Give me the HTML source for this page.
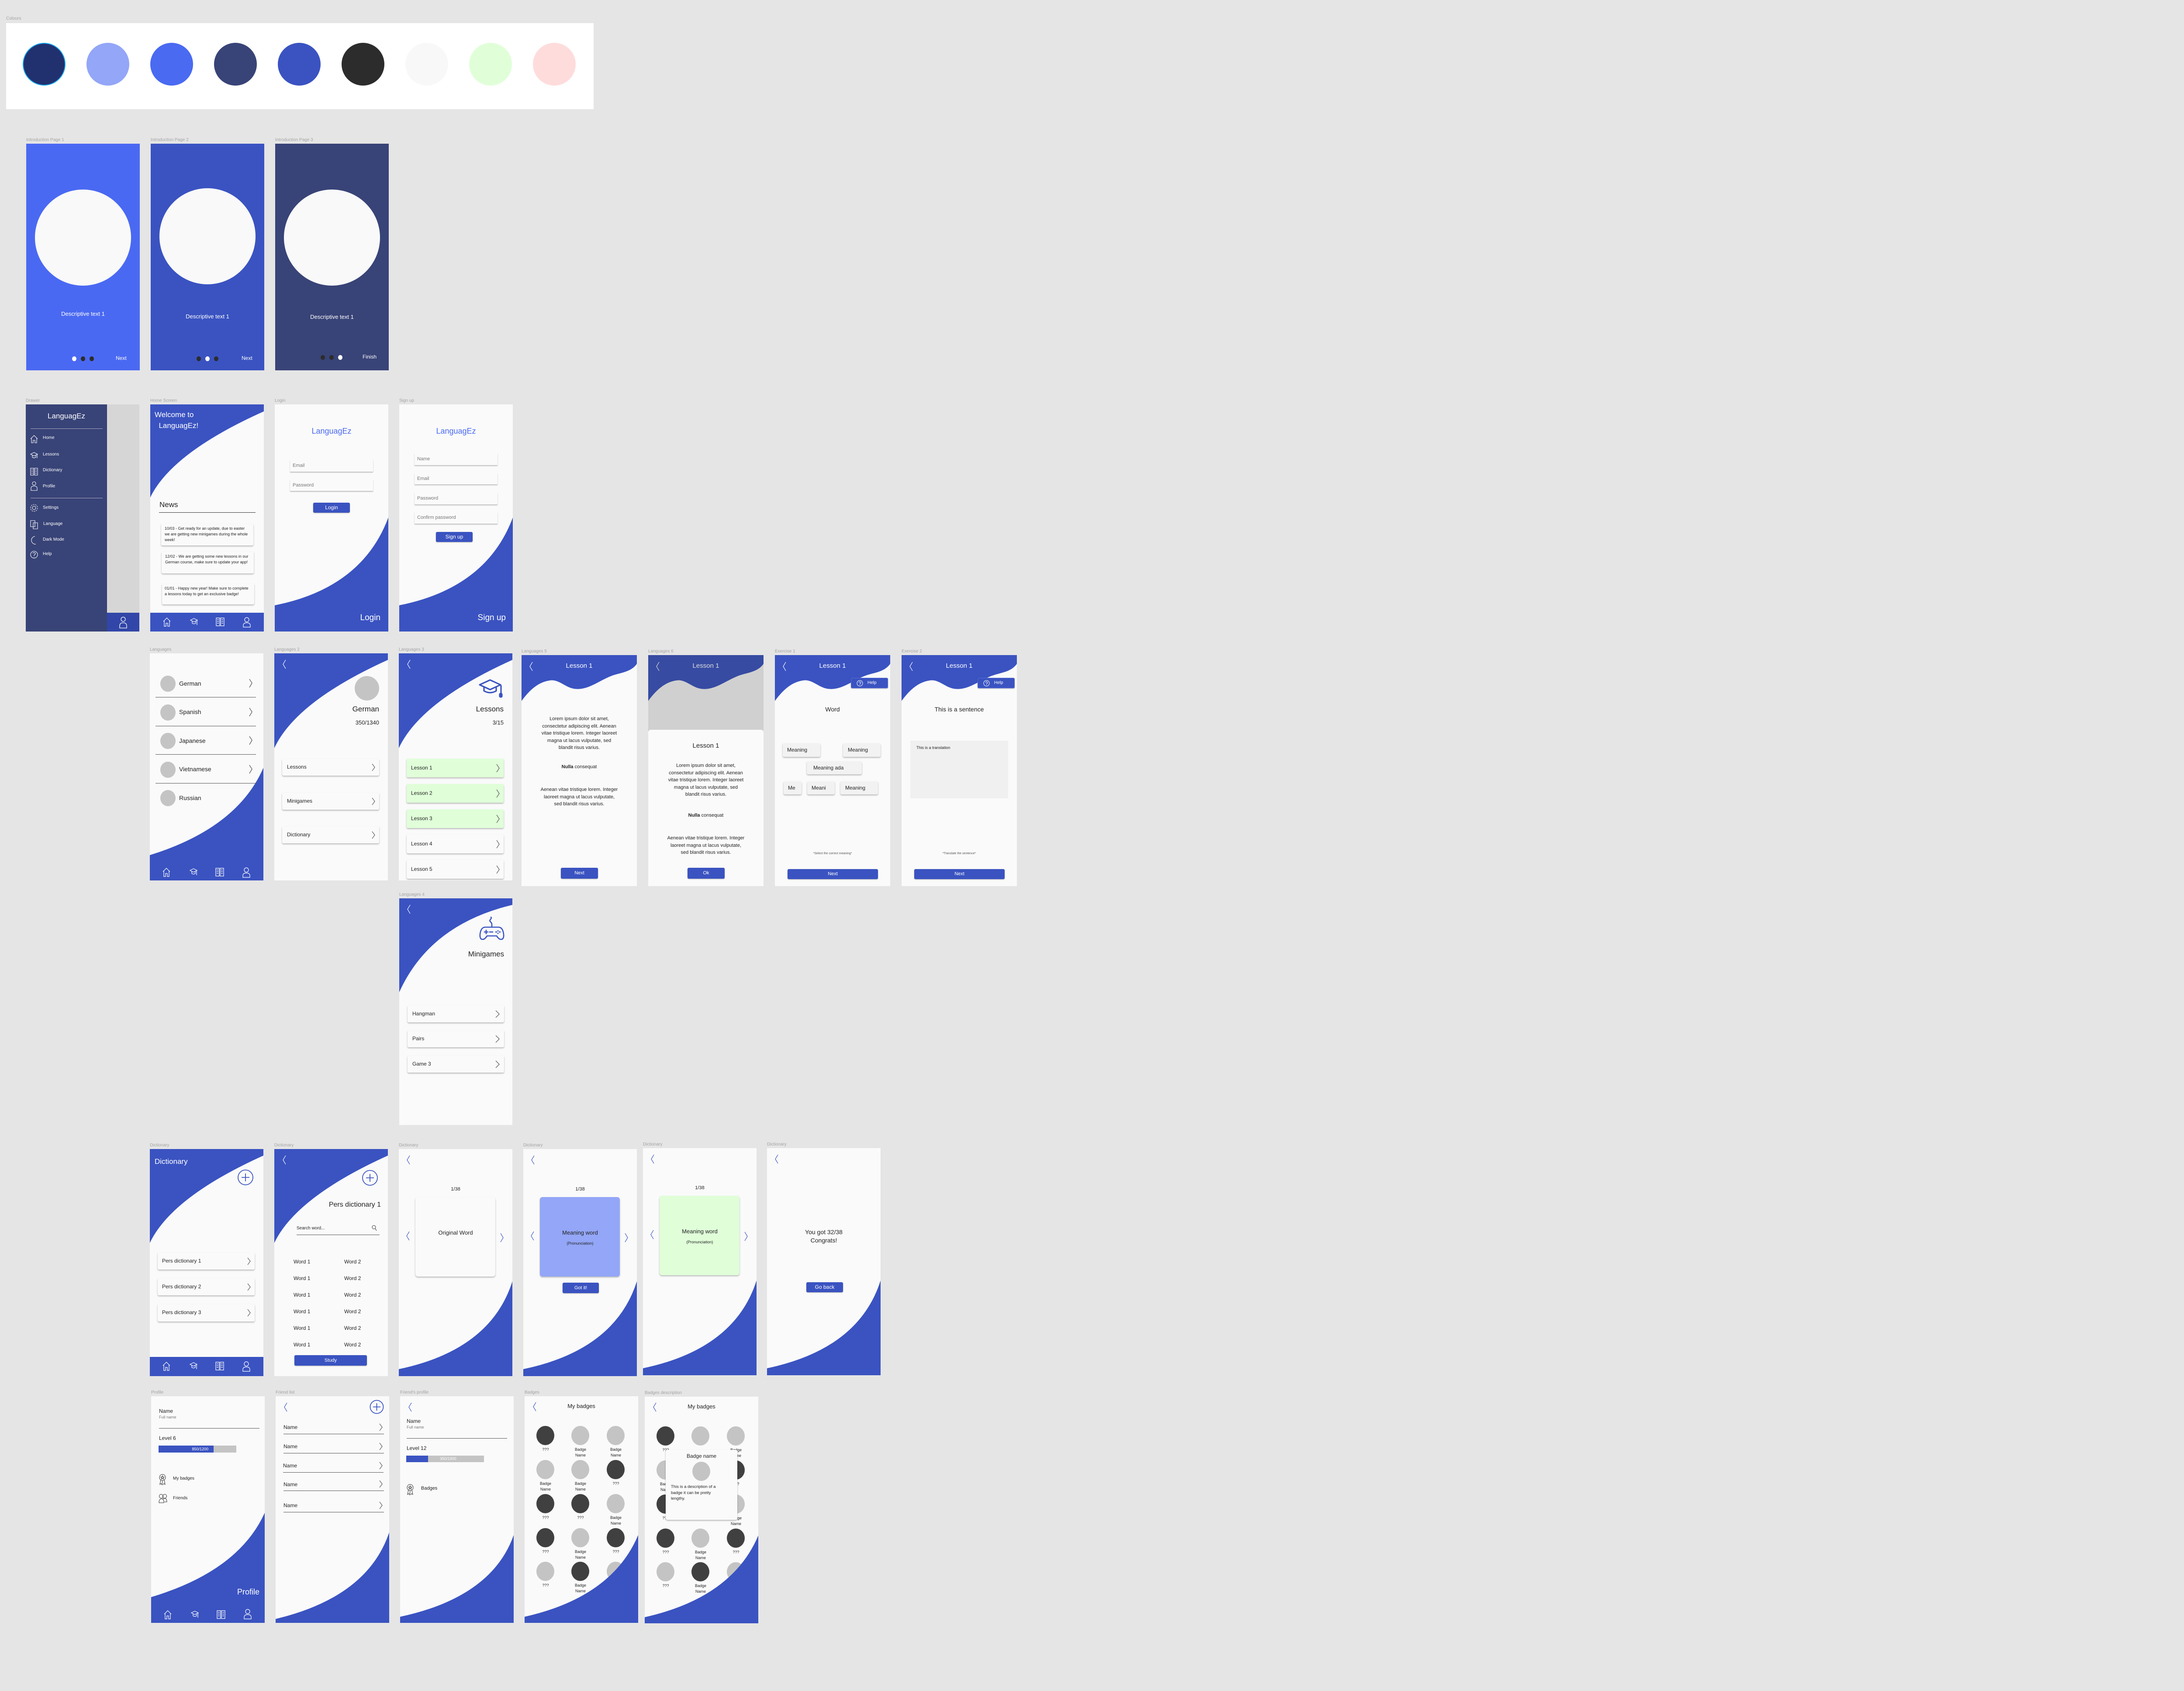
<!DOCTYPE html>
<html><head><meta charset="utf-8">
<style>
*{margin:0;padding:0;box-sizing:border-box}
body{width:5568px;height:3872px;background:#e5e5e5;position:relative;overflow:hidden;font-family:"Liberation Sans",sans-serif;color:#222}
.f{position:absolute;background:#fafafa;overflow:hidden}
.lbl{position:absolute;font-size:10px;color:#a3a3a3;white-space:nowrap}
.t{position:absolute;white-space:nowrap}
.bg{position:absolute;left:0;top:0;width:100%;height:100%}
.card{position:absolute;background:#fafafa;border-radius:3px;box-shadow:0 2px 3px rgba(0,0,0,.28)}
.btn{position:absolute;background:#3a53c1;color:#fff;border-radius:3px;text-align:center;font-size:11px;box-shadow:0 1px 2px rgba(0,0,0,.3)}
.field{position:absolute;background:#fafafa;box-shadow:0 2px 2px rgba(0,0,0,.25);font-size:11px;color:#777;padding-left:6px}
.nav{position:absolute;left:0;bottom:0;width:100%;height:40px;background:#3a53c1}
.nav svg{position:absolute;top:10px}
.cc{position:absolute;border-radius:50%}
.chev{position:absolute}
</style></head><body>

<!-- Palette -->
<div class="lbl" style="left:14px;top:37px">Colours</div>
<div style="position:absolute;left:14px;top:53px;width:1345px;height:197px;background:#fff"></div>
<div class="cc" style="left:52px;top:98px;width:98px;height:98px;background:#21306f;border:2px solid #1aa8f0"></div>
<div class="cc" style="left:198px;top:98px;width:98px;height:98px;background:#93a6f7"></div>
<div class="cc" style="left:344px;top:98px;width:98px;height:98px;background:#4a6af2"></div>
<div class="cc" style="left:490px;top:98px;width:98px;height:98px;background:#384377"></div>
<div class="cc" style="left:636px;top:98px;width:98px;height:98px;background:#3a53c1"></div>
<div class="cc" style="left:782px;top:98px;width:98px;height:98px;background:#2c2c2c"></div>
<div class="cc" style="left:928px;top:98px;width:98px;height:98px;background:#f8f8f8"></div>
<div class="cc" style="left:1074px;top:98px;width:98px;height:98px;background:#e0ffd9"></div>
<div class="cc" style="left:1220px;top:98px;width:98px;height:98px;background:#ffdcdc"></div>

<!-- Intro pages -->
<div class="lbl" style="left:60px;top:315px">Introduction Page 1</div>
<div class="f" style="left:60px;top:329px;width:260px;height:519px;background:#4a69f2">
 <div class="cc" style="left:20px;top:105px;width:220px;height:220px;background:#f9f9f9"></div>
 <div class="t" style="left:0;width:260px;text-align:center;top:382px;font-size:13px;color:#fff">Descriptive text 1</div>
 <div class="cc" style="left:105px;top:487px;width:10px;height:11px;background:#fff"></div>
 <div class="cc" style="left:125px;top:487px;width:10px;height:11px;background:#2c2c2c"></div>
 <div class="cc" style="left:145px;top:487px;width:10px;height:11px;background:#2c2c2c"></div>
 <div class="t" style="left:205px;top:484px;font-size:12px;color:#fff">Next</div>
</div>
<div class="lbl" style="left:345px;top:315px">Introduction Page 2</div>
<div class="f" style="left:345px;top:329px;width:260px;height:519px;background:#3a53c1">
 <div class="cc" style="left:20px;top:102px;width:220px;height:220px;background:#f9f9f9"></div>
 <div class="t" style="left:0;width:260px;text-align:center;top:388px;font-size:13px;color:#fff">Descriptive text 1</div>
 <div class="cc" style="left:105px;top:487px;width:10px;height:11px;background:#2c2c2c"></div>
 <div class="cc" style="left:125px;top:487px;width:10px;height:11px;background:#fff"></div>
 <div class="cc" style="left:145px;top:487px;width:10px;height:11px;background:#2c2c2c"></div>
 <div class="t" style="left:208px;top:484px;font-size:12px;color:#fff">Next</div>
</div>
<div class="lbl" style="left:630px;top:315px">Introduction Page 3</div>
<div class="f" style="left:630px;top:329px;width:260px;height:519px;background:#384377">
 <div class="cc" style="left:20px;top:105px;width:220px;height:220px;background:#f9f9f9"></div>
 <div class="t" style="left:0;width:260px;text-align:center;top:389px;font-size:13px;color:#fff">Descriptive text 1</div>
 <div class="cc" style="left:104px;top:484px;width:10px;height:11px;background:#2c2c2c"></div>
 <div class="cc" style="left:124px;top:484px;width:10px;height:11px;background:#2c2c2c"></div>
 <div class="cc" style="left:144px;top:484px;width:10px;height:11px;background:#fff"></div>
 <div class="t" style="left:200px;top:481px;font-size:12px;color:#fff">Finish</div>
</div>

<!-- Drawer -->
<div class="lbl" style="left:59px;top:912px">Drawer</div>
<div class="f" style="left:59px;top:926px;width:260px;height:520px;background:#d6d6d6">
 <div style="position:absolute;left:0;top:0;width:186px;height:520px;background:#384377"></div>
 <div style="position:absolute;left:186px;top:477px;width:74px;height:43px;background:#3146a8"></div>
 <svg style="position:absolute;left:213px;top:485px" width="20" height="28" viewBox="0 0 20 28" fill="none" stroke="#fff" stroke-width="1.3"><circle cx="10" cy="7" r="5"/><path d="M2 27 V22 Q2 15 10 15 Q18 15 18 22 V27 Z"/></svg>
 <div class="t" style="left:0;width:186px;text-align:center;top:17px;font-size:17px;color:#fff">LanguagEz</div>
 <div style="position:absolute;left:11px;top:55px;width:165px;height:1px;background:#aab"></div>
 <div style="position:absolute;left:11px;top:214px;width:165px;height:1px;background:#aab"></div>
 <svg style="position:absolute;left:9px;top:70px" width="22" height="290" fill="none" stroke="#fff" stroke-width="1.1">
  <path d="M2 9 L10 1 L18 9 M4 7 V18 H8 V12 H12 V18 H16 V7"/>
  <path d="M2 44 L10 40 L18 44 L10 48 Z M6 46 V51 Q10 54 14 51 V46 M17 45 V53"/>
  <path d="M2 76 H9 V92 H2 Z M11 76 H18 V92 H11 Z M4 80 H7 M4 84 H7 M4 88 H7 M13 80 H16 M13 84 H16 M13 88 H16"/>
  <circle cx="10" cy="111" r="4"/><path d="M3 127 V122 Q3 117 10 117 Q17 117 17 122 V127 Z"/>
  <circle cx="10" cy="167" r="4"/><circle cx="10" cy="167" r="8" stroke-dasharray="3 2"/>
  <path d="M2 196 H12 V210 H2 Z M8 201 H18 V215 H8 Z"/>
  <path d="M12 232 A9 9 0 1 0 14 250 A7 7 0 0 1 12 232 Z"/>
  <circle cx="10" cy="274" r="8"/><path d="M7 271 Q10 267 13 271 Q13 274 10 275 V277 M10 279 V280"/>
 </svg>
 <div class="t" style="left:39px;top:71px;font-size:10px;color:#fff">Home</div>
 <div class="t" style="left:39px;top:109px;font-size:10px;color:#fff">Lessons</div>
 <div class="t" style="left:39px;top:145px;font-size:10px;color:#fff">Dictionary</div>
 <div class="t" style="left:39px;top:182px;font-size:10px;color:#fff">Profile</div>
 <div class="t" style="left:39px;top:231px;font-size:10px;color:#fff">Settings</div>
 <div class="t" style="left:40px;top:268px;font-size:10px;color:#fff">Language</div>
 <div class="t" style="left:39px;top:304px;font-size:10px;color:#fff">Dark Mode</div>
 <div class="t" style="left:39px;top:337px;font-size:10px;color:#fff">Help</div>
</div>

<!-- Home -->
<div class="lbl" style="left:344px;top:912px">Home Screen</div>
<div class="f" style="left:344px;top:926px;width:260px;height:520px">
 <svg class="bg" viewBox="0 0 260 520" preserveAspectRatio="none"><path d="M0,0H260V16Q50,110 0,213Z" fill="#3a53c1"/></svg>
 <div class="t" style="left:10px;top:11px;font-size:17px;color:#fff;line-height:25px">Welcome to<br>&nbsp;&nbsp;LanguagEz!</div>
 <div class="t" style="left:21px;top:220px;font-size:17px;color:#222">News</div>
 <div style="position:absolute;left:20px;top:247px;width:221px;height:1px;background:#333"></div>
 <div class="card" style="left:25px;top:273px;width:211px;height:50px;font-size:9px;line-height:13px;padding:5px 8px">10/03 - Get ready for an update, due to easter we are getting new minigames during the whole week!</div>
 <div class="card" style="left:26px;top:337px;width:211px;height:50px;font-size:9px;line-height:13px;padding:5px 8px">12/02 - We are getting some new lessons in our German course, make sure to update your app!</div>
 <div class="card" style="left:27px;top:410px;width:211px;height:48px;font-size:9px;line-height:13px;padding:5px 6px">01/01 - Happy new year! Make sure to complete a lessons today to get an exclusive badge!</div>
 <div class="nav" style="height:43px">
  <svg style="left:28px" width="20" height="22" viewBox="0 0 20 22" fill="none" stroke="#fff" stroke-width="1.2"><path d="M2 10 L10 2 L18 10 M4 8 V21 H8 V14 H12 V21 H16 V8"/></svg>
  <svg style="left:90px" width="20" height="22" viewBox="0 0 20 22" fill="none" stroke="#fff" stroke-width="1.2"><path d="M2 7 L10 3 L18 7 L10 11 Z M6 9 V14 Q10 17 14 14 V9 M17 8 V18"/></svg>
  <svg style="left:150px" width="20" height="22" viewBox="0 0 20 22" fill="none" stroke="#fff" stroke-width="1.2"><path d="M1 2 H9 V20 H1 Z M11 2 H19 V20 H11 Z M3 6 H7 M3 10 H7 M3 14 H7 M13 6 H17 M13 10 H17 M13 14 H17"/></svg>
  <svg style="left:211px" width="20" height="24" viewBox="0 0 20 24" fill="none" stroke="#fff" stroke-width="1.2"><circle cx="10" cy="6" r="5"/><path d="M2 23 V19 Q2 13 10 13 Q18 13 18 19 V23 Z"/></svg>
 </div>
</div>

<!-- Login -->
<div class="lbl" style="left:629px;top:912px">Login</div>
<div class="f" style="left:629px;top:926px;width:260px;height:520px">
 <svg class="bg" viewBox="0 0 260 520" preserveAspectRatio="none"><path d="M260,259Q200,420 0,460V520H260Z" fill="#3a53c1"/></svg>
 <div class="t" style="left:0;width:260px;text-align:center;top:51px;font-size:18px;color:#4a6af2">LanguagEz</div>
 <div class="field" style="left:35px;top:127px;width:190px;height:27px;line-height:27px">Email</div>
 <div class="field" style="left:35px;top:172px;width:190px;height:26px;line-height:26px">Password</div>
 <div class="btn" style="left:88px;top:225px;width:84px;height:23px;line-height:23px;font-size:12px">Login</div>
 <div class="t" style="right:18px;top:478px;font-size:19px;color:#fff">Login</div>
</div>

<!-- Sign up -->
<div class="lbl" style="left:914px;top:912px">Sign up</div>
<div class="f" style="left:914px;top:926px;width:260px;height:520px">
 <svg class="bg" viewBox="0 0 260 520" preserveAspectRatio="none"><path d="M260,259Q200,420 0,460V520H260Z" fill="#3a53c1"/></svg>
 <div class="t" style="left:0;width:260px;text-align:center;top:51px;font-size:18px;color:#4a6af2">LanguagEz</div>
 <div class="field" style="left:35px;top:112px;width:190px;height:27px;line-height:27px">Name</div>
 <div class="field" style="left:35px;top:157px;width:190px;height:26px;line-height:26px">Email</div>
 <div class="field" style="left:35px;top:202px;width:190px;height:27px;line-height:27px">Password</div>
 <div class="field" style="left:35px;top:246px;width:190px;height:27px;line-height:27px">Confirm password</div>
 <div class="btn" style="left:84px;top:292px;width:84px;height:23px;line-height:23px;font-size:12px">Sign up</div>
 <div class="t" style="right:16px;top:478px;font-size:19px;color:#fff">Sign up</div>
</div>

<!-- Languages -->
<div class="lbl" style="left:343px;top:1482px">Languages</div>
<div class="f" style="left:343px;top:1496px;width:260px;height:520px">
 <svg class="bg" viewBox="0 0 260 520" preserveAspectRatio="none"><path d="M260,262Q200,400 0,462V520H260Z" fill="#3a53c1"/></svg>
 <div class="cc" style="left:24px;top:51px;width:35px;height:37px;background:#c4c4c4"></div>
 <div class="cc" style="left:24px;top:117px;width:35px;height:37px;background:#c4c4c4"></div>
 <div class="cc" style="left:24px;top:182px;width:35px;height:37px;background:#c4c4c4"></div>
 <div class="cc" style="left:24px;top:248px;width:35px;height:37px;background:#c4c4c4"></div>
 <div class="cc" style="left:24px;top:313px;width:35px;height:37px;background:#c4c4c4"></div>
 <div class="t" style="left:67px;top:61px;font-size:14px">German</div>
 <div class="t" style="left:67px;top:126px;font-size:14px">Spanish</div>
 <div class="t" style="left:67px;top:192px;font-size:14px">Japanese</div>
 <div class="t" style="left:67px;top:257px;font-size:14px">Vietnamese</div>
 <div class="t" style="left:67px;top:323px;font-size:14px">Russian</div>
 <div style="position:absolute;left:13px;top:100px;width:230px;height:1px;background:#555"></div>
 <div style="position:absolute;left:13px;top:166px;width:230px;height:1px;background:#555"></div>
 <div style="position:absolute;left:13px;top:231px;width:230px;height:1px;background:#555"></div>
 <div style="position:absolute;left:13px;top:297px;width:230px;height:1px;background:#555"></div>
 <svg style="position:absolute;left:226px;top:58px" width="10" height="230" fill="none" stroke="#333" stroke-width="1.1"><path d="M2 1 L8 10 L2 20 M2 67 L8 76 L2 86 M2 132 L8 141 L2 151 M2 198 L8 207 L2 217"/></svg>
 <div class="nav" style="background:transparent">
  <svg style="left:28px" width="20" height="22" viewBox="0 0 20 22" fill="none" stroke="#fff" stroke-width="1.2"><path d="M2 10 L10 2 L18 10 M4 8 V21 H8 V14 H12 V21 H16 V8"/></svg>
  <svg style="left:90px" width="20" height="22" viewBox="0 0 20 22" fill="none" stroke="#fff" stroke-width="1.2"><path d="M2 7 L10 3 L18 7 L10 11 Z M6 9 V14 Q10 17 14 14 V9 M17 8 V18"/></svg>
  <svg style="left:150px" width="20" height="22" viewBox="0 0 20 22" fill="none" stroke="#fff" stroke-width="1.2"><path d="M1 2 H9 V20 H1 Z M11 2 H19 V20 H11 Z M3 6 H7 M3 10 H7 M3 14 H7 M13 6 H17 M13 10 H17 M13 14 H17"/></svg>
  <svg style="left:211px" width="20" height="24" viewBox="0 0 20 24" fill="none" stroke="#fff" stroke-width="1.2"><circle cx="10" cy="6" r="5"/><path d="M2 23 V19 Q2 13 10 13 Q18 13 18 19 V23 Z"/></svg>
 </div>
</div>

<!-- Languages 2 -->
<div class="lbl" style="left:628px;top:1482px">Languages 2</div>
<div class="f" style="left:628px;top:1496px;width:260px;height:520px">
 <svg class="bg" viewBox="0 0 260 520" preserveAspectRatio="none"><path d="M0,0H260V15Q50,110 0,217Z" fill="#3a53c1"/></svg>
 <svg class="chev" style="left:18px;top:14px" width="10" height="22" fill="none" stroke="#fff" stroke-width="1.2"><path d="M8 1 L2 11 L8 21"/></svg>
 <div class="cc" style="left:184px;top:52px;width:56px;height:56px;background:#c4c4c4"></div>
 <div class="t" style="right:20px;top:118px;font-size:17px">German</div>
 <div class="t" style="right:20px;top:151px;font-size:13px">350/1340</div>
 <div class="card" style="left:18px;top:241px;width:222px;height:39px"><div class="t" style="left:11px;top:12px;font-size:12px">Lessons</div><svg class="chev" style="right:8px;top:11px" width="9" height="18" fill="none" stroke="#333"><path d="M1 1 L7 9 L1 17"/></svg></div>
 <div class="card" style="left:18px;top:319px;width:222px;height:39px"><div class="t" style="left:11px;top:12px;font-size:12px">Minigames</div><svg class="chev" style="right:8px;top:11px" width="9" height="18" fill="none" stroke="#333"><path d="M1 1 L7 9 L1 17"/></svg></div>
 <div class="card" style="left:18px;top:396px;width:222px;height:39px"><div class="t" style="left:11px;top:12px;font-size:12px">Dictionary</div><svg class="chev" style="right:8px;top:11px" width="9" height="18" fill="none" stroke="#333"><path d="M1 1 L7 9 L1 17"/></svg></div>
</div>

<!-- Languages 3 -->
<div class="lbl" style="left:913px;top:1482px">Languages 3</div>
<div class="f" style="left:913px;top:1496px;width:260px;height:520px">
 <svg class="bg" viewBox="0 0 260 520" preserveAspectRatio="none"><path d="M0,0H260V15Q50,110 0,217Z" fill="#3a53c1"/></svg>
 <svg class="chev" style="left:18px;top:14px" width="10" height="22" fill="none" stroke="#fff" stroke-width="1.2"><path d="M8 1 L2 11 L8 21"/></svg>
 <svg style="position:absolute;left:182px;top:58px" width="60" height="44" viewBox="0 0 60 44" fill="none" stroke="#3a53c1" stroke-width="3.2" stroke-linejoin="round"><path d="M3 14 L27 3 L51 14 L27 25 Z M13 19 V28 Q27 36 41 28 V19 M52 15 V38"/><rect x="49" y="34" width="5" height="8" rx="2" fill="#3a53c1"/></svg>
 <div class="t" style="right:20px;top:118px;font-size:17px">Lessons</div>
 <div class="t" style="right:20px;top:151px;font-size:13px">3/15</div>
 <div class="card" style="left:18px;top:241px;width:222px;height:43px;background:#e0ffd9"><div class="t" style="left:10px;top:14px;font-size:12px">Lesson 1</div><svg class="chev" style="right:8px;top:12px" width="9" height="20" fill="none" stroke="#333"><path d="M1 1 L7 10 L1 19"/></svg></div>
 <div class="card" style="left:18px;top:299px;width:222px;height:43px;background:#e0ffd9"><div class="t" style="left:10px;top:14px;font-size:12px">Lesson 2</div><svg class="chev" style="right:8px;top:12px" width="9" height="20" fill="none" stroke="#333"><path d="M1 1 L7 10 L1 19"/></svg></div>
 <div class="card" style="left:18px;top:357px;width:222px;height:43px;background:#e0ffd9"><div class="t" style="left:10px;top:14px;font-size:12px">Lesson 3</div><svg class="chev" style="right:8px;top:12px" width="9" height="20" fill="none" stroke="#333"><path d="M1 1 L7 10 L1 19"/></svg></div>
 <div class="card" style="left:18px;top:415px;width:222px;height:43px"><div class="t" style="left:10px;top:14px;font-size:12px">Lesson 4</div><svg class="chev" style="right:8px;top:12px" width="9" height="20" fill="none" stroke="#333"><path d="M1 1 L7 10 L1 19"/></svg></div>
 <div class="card" style="left:18px;top:473px;width:222px;height:43px"><div class="t" style="left:10px;top:14px;font-size:12px">Lesson 5</div><svg class="chev" style="right:8px;top:12px" width="9" height="20" fill="none" stroke="#333"><path d="M1 1 L7 10 L1 19"/></svg></div>
</div>

<!-- Languages 5 -->
<div class="lbl" style="left:1194px;top:1486px">Languages 5</div>
<div class="f" style="left:1194px;top:1500px;width:264px;height:529px">
 <svg class="bg" viewBox="0 0 264 529" preserveAspectRatio="none"><path d="M0,0H264V20C250,40 225,40 205,48C175,60 150,82 120,77C100,74 85,55 65,58C35,62 15,85 0,105Z" fill="#3a53c1"/></svg>
 <svg class="chev" style="left:17px;top:15px" width="10" height="22" fill="none" stroke="#fff" stroke-width="1.2"><path d="M8 1 L2 11 L8 21"/></svg>
 <div class="t" style="left:0;width:264px;text-align:center;top:16px;font-size:15px;color:#fff">Lesson 1</div>
 <div class="t" style="left:0;width:264px;text-align:center;top:138px;font-size:11px;line-height:16.6px">Lorem ipsum dolor sit amet,<br>consectetur adipiscing elit. Aenean<br>vitae tristique lorem. Integer laoreet<br>magna ut lacus vulputate, sed<br>blandit risus varius.</div>
 <div class="t" style="left:0;width:264px;text-align:center;top:250px;font-size:11px"><b>Nulla</b> consequat</div>
 <div class="t" style="left:0;width:264px;text-align:center;top:300px;font-size:11px;line-height:16.6px">Aenean vitae tristique lorem. Integer<br>laoreet magna ut lacus vulputate,<br>sed blandit risus varius.</div>
 <div class="btn" style="left:90px;top:487px;width:85px;height:25px;line-height:25px">Next</div>
</div>

<!-- Languages 6 -->
<div class="lbl" style="left:1484px;top:1486px">Languages 6</div>
<div class="f" style="left:1484px;top:1500px;width:264px;height:529px;background:#d0d0d0">
 <svg class="bg" viewBox="0 0 264 529" preserveAspectRatio="none"><path d="M0,0H264V20C250,40 225,40 205,48C175,60 150,82 120,77C100,74 85,55 65,58C35,62 15,85 0,105Z" fill="#374ba2"/></svg>
 <svg class="chev" style="left:17px;top:15px" width="10" height="22" fill="none" stroke="#ddd" stroke-width="1.2"><path d="M8 1 L2 11 L8 21"/></svg>
 <div class="t" style="left:0;width:264px;text-align:center;top:16px;font-size:15px;color:#ddd">Lesson 1</div>
 <div style="position:absolute;left:0;top:171px;width:264px;height:358px;background:#fafafa;border-radius:6px 6px 0 0"></div>
 <div class="t" style="left:0;width:264px;text-align:center;top:199px;font-size:15px">Lesson 1</div>
 <div class="t" style="left:0;width:264px;text-align:center;top:245px;font-size:11px;line-height:16.6px">Lorem ipsum dolor sit amet,<br>consectetur adipiscing elit. Aenean<br>vitae tristique lorem. Integer laoreet<br>magna ut lacus vulputate, sed<br>blandit risus varius.</div>
 <div class="t" style="left:0;width:264px;text-align:center;top:361px;font-size:11px"><b>Nulla</b> consequat</div>
 <div class="t" style="left:0;width:264px;text-align:center;top:411px;font-size:11px;line-height:16.6px">Aenean vitae tristique lorem. Integer<br>laoreet magna ut lacus vulputate,<br>sed blandit risus varius.</div>
 <div class="btn" style="left:90px;top:487px;width:85px;height:25px;line-height:25px">Ok</div>
</div>

<!-- Exercise 1 -->
<div class="lbl" style="left:1774px;top:1486px">Exercise 1</div>
<div class="f" style="left:1774px;top:1500px;width:264px;height:529px">
 <svg class="bg" viewBox="0 0 264 529" preserveAspectRatio="none"><path d="M0,0H264V20C250,40 225,40 205,48C175,60 150,82 120,77C100,74 85,55 65,58C35,62 15,85 0,105Z" fill="#3a53c1"/></svg>
 <svg class="chev" style="left:17px;top:15px" width="10" height="22" fill="none" stroke="#fff" stroke-width="1.2"><path d="M8 1 L2 11 L8 21"/></svg>
 <div class="t" style="left:0;width:264px;text-align:center;top:16px;font-size:15px;color:#fff">Lesson 1</div>
 <div class="btn" style="left:174px;top:52px;width:85px;height:24px;border:1px solid #5a70d6"><svg style="position:absolute;left:12px;top:4px" width="15" height="16" fill="none" stroke="#fff" stroke-width="1"><circle cx="7.5" cy="7.5" r="6.5"/><path d="M5 6 Q7.5 2 10 6 Q10 8 7.5 9 V10.5 M7.5 12 V12.5"/></svg><span style="position:absolute;left:37px;top:5px;font-size:10px">Help</span></div>
 <div class="t" style="left:0;width:264px;text-align:center;top:116px;font-size:14px">Word</div>
 <div class="card" style="left:18px;top:202px;width:86px;height:31px;background:#f2f2f2;font-size:12px;line-height:31px;padding-left:10px">Meaning</div>
 <div class="card" style="left:156px;top:202px;width:86px;height:31px;background:#f2f2f2;font-size:12px;line-height:31px;padding-left:11px">Meaning</div>
 <div class="card" style="left:73px;top:243px;width:126px;height:30px;background:#f2f2f2;font-size:12px;line-height:30px;padding-left:15px">Meaning ada</div>
 <div class="card" style="left:20px;top:289px;width:41px;height:30px;background:#f2f2f2;font-size:12px;line-height:30px;padding-left:10px">Me</div>
 <div class="card" style="left:74px;top:289px;width:63px;height:30px;background:#f2f2f2;font-size:12px;line-height:30px;padding-left:10px">Meani</div>
 <div class="card" style="left:150px;top:289px;width:86px;height:30px;background:#f2f2f2;font-size:12px;line-height:30px;padding-left:11px">Meaning</div>
 <div class="t" style="left:0;width:264px;text-align:center;top:451px;font-size:7px;color:#555">*Select the correct meaning*</div>
 <div class="btn" style="left:29px;top:490px;width:207px;height:23px;line-height:23px">Next</div>
</div>

<!-- Exercise 2 -->
<div class="lbl" style="left:2064px;top:1486px">Exercise 2</div>
<div class="f" style="left:2064px;top:1500px;width:264px;height:529px">
 <svg class="bg" viewBox="0 0 264 529" preserveAspectRatio="none"><path d="M0,0H264V20C250,40 225,40 205,48C175,60 150,82 120,77C100,74 85,55 65,58C35,62 15,85 0,105Z" fill="#3a53c1"/></svg>
 <svg class="chev" style="left:17px;top:15px" width="10" height="22" fill="none" stroke="#fff" stroke-width="1.2"><path d="M8 1 L2 11 L8 21"/></svg>
 <div class="t" style="left:0;width:264px;text-align:center;top:16px;font-size:15px;color:#fff">Lesson 1</div>
 <div class="btn" style="left:174px;top:52px;width:85px;height:24px;border:1px solid #5a70d6"><svg style="position:absolute;left:12px;top:4px" width="15" height="16" fill="none" stroke="#fff" stroke-width="1"><circle cx="7.5" cy="7.5" r="6.5"/><path d="M5 6 Q7.5 2 10 6 Q10 8 7.5 9 V10.5 M7.5 12 V12.5"/></svg><span style="position:absolute;left:37px;top:5px;font-size:10px">Help</span></div>
 <div class="t" style="left:0;width:264px;text-align:center;top:116px;font-size:14px">This is a sentence</div>
 <div style="position:absolute;left:20px;top:196px;width:224px;height:132px;background:#f0f0f0"></div>
 <div class="t" style="left:34px;top:207px;font-size:9px">This is a translation</div>
 <div class="t" style="left:0;width:264px;text-align:center;top:451px;font-size:7px;color:#555">*Translate the sentence*</div>
 <div class="btn" style="left:29px;top:490px;width:207px;height:23px;line-height:23px">Next</div>
</div>

<!-- Minigames -->
<div class="lbl" style="left:914px;top:2043px">Languages 4</div>
<div class="f" style="left:914px;top:2057px;width:259px;height:519px">
 <svg class="bg" viewBox="0 0 259 519" preserveAspectRatio="none"><path d="M0,0H259V15Q70,60 0,215Z" fill="#3a53c1"/></svg>
 <svg class="chev" style="left:17px;top:14px" width="10" height="22" fill="none" stroke="#fff" stroke-width="1.2"><path d="M8 1 L2 11 L8 21"/></svg>
 <svg style="position:absolute;left:183px;top:42px" width="58" height="56" viewBox="0 0 58 56" fill="none" stroke="#3a53c1" stroke-width="2.6" stroke-linecap="round"><path d="M29 24 V18 Q29 14 26 12 Q23 9 26 6 Q29 3 27 1"/><path d="M14 24 H44 Q54 24 56 40 Q57 52 50 52 Q45 52 40 44 H18 Q13 52 8 52 Q1 52 2 40 Q4 24 14 24 Z"/><path d="M12 35 H20 M16 31 V39 M24 35 H31 M38 35 H40 M46 35 H48 M43 32 V32.5 M43 38 V38.5"/></svg>
 <div class="t" style="right:19px;top:118px;font-size:17px">Minigames</div>
 <div class="card" style="left:19px;top:245px;width:221px;height:39px"><div class="t" style="left:11px;top:12px;font-size:12px">Hangman</div><svg class="chev" style="right:9px;top:11px" width="11" height="18" fill="none" stroke="#333"><path d="M1 1 L9 9 L1 17"/></svg></div>
 <div class="card" style="left:19px;top:302px;width:221px;height:39px"><div class="t" style="left:11px;top:12px;font-size:12px">Pairs</div><svg class="chev" style="right:9px;top:11px" width="11" height="18" fill="none" stroke="#333"><path d="M1 1 L9 9 L1 17"/></svg></div>
 <div class="card" style="left:19px;top:360px;width:221px;height:39px"><div class="t" style="left:11px;top:12px;font-size:12px">Game 3</div><svg class="chev" style="right:9px;top:11px" width="11" height="18" fill="none" stroke="#333"><path d="M1 1 L9 9 L1 17"/></svg></div>
</div>

<!-- Dictionary 1 -->
<div class="lbl" style="left:343px;top:2617px">Dictionary</div>
<div class="f" style="left:343px;top:2631px;width:260px;height:520px">
 <svg class="bg" viewBox="0 0 260 520" preserveAspectRatio="none"><path d="M0,0H260V15Q50,110 0,215Z" fill="#3a53c1"/></svg>
 <div class="t" style="left:11px;top:19px;font-size:17px;color:#fff">Dictionary</div>
 <svg style="position:absolute;left:200px;top:46px" width="38" height="38" fill="#fafafa" stroke="#3a53c1" stroke-width="1.8"><circle cx="19" cy="19" r="17"/><path d="M19 10 V28 M10 19 H28"/></svg>
 <div class="card" style="left:18px;top:237px;width:222px;height:39px"><div class="t" style="left:10px;top:12px;font-size:12px">Pers dictionary 1</div><svg class="chev" style="right:8px;top:11px" width="9" height="18" fill="none" stroke="#333"><path d="M1 1 L7 9 L1 17"/></svg></div>
 <div class="card" style="left:18px;top:296px;width:222px;height:39px"><div class="t" style="left:10px;top:12px;font-size:12px">Pers dictionary 2</div><svg class="chev" style="right:8px;top:11px" width="9" height="18" fill="none" stroke="#333"><path d="M1 1 L7 9 L1 17"/></svg></div>
 <div class="card" style="left:18px;top:355px;width:222px;height:40px"><div class="t" style="left:10px;top:12px;font-size:12px">Pers dictionary 3</div><svg class="chev" style="right:8px;top:11px" width="9" height="18" fill="none" stroke="#333"><path d="M1 1 L7 9 L1 17"/></svg></div>
 <div class="nav" style="height:44px">
  <svg style="left:28px" width="20" height="22" viewBox="0 0 20 22" fill="none" stroke="#fff" stroke-width="1.2"><path d="M2 10 L10 2 L18 10 M4 8 V21 H8 V14 H12 V21 H16 V8"/></svg>
  <svg style="left:90px" width="20" height="22" viewBox="0 0 20 22" fill="none" stroke="#fff" stroke-width="1.2"><path d="M2 7 L10 3 L18 7 L10 11 Z M6 9 V14 Q10 17 14 14 V9 M17 8 V18"/></svg>
  <svg style="left:150px" width="20" height="22" viewBox="0 0 20 22" fill="none" stroke="#fff" stroke-width="1.2"><path d="M1 2 H9 V20 H1 Z M11 2 H19 V20 H11 Z M3 6 H7 M3 10 H7 M3 14 H7 M13 6 H17 M13 10 H17 M13 14 H17"/></svg>
  <svg style="left:211px" width="20" height="24" viewBox="0 0 20 24" fill="none" stroke="#fff" stroke-width="1.2"><circle cx="10" cy="6" r="5"/><path d="M2 23 V19 Q2 13 10 13 Q18 13 18 19 V23 Z"/></svg>
 </div>
</div>

<!-- Dictionary 2 -->
<div class="lbl" style="left:628px;top:2617px">Dictionary</div>
<div class="f" style="left:628px;top:2631px;width:260px;height:520px">
 <svg class="bg" viewBox="0 0 260 520" preserveAspectRatio="none"><path d="M0,0H260V15Q50,110 0,215Z" fill="#3a53c1"/></svg>
 <svg class="chev" style="left:18px;top:14px" width="10" height="22" fill="none" stroke="#fff" stroke-width="1.2"><path d="M8 1 L2 11 L8 21"/></svg>
 <svg style="position:absolute;left:200px;top:47px" width="38" height="38" fill="#fafafa" stroke="#3a53c1" stroke-width="1.8"><circle cx="19" cy="19" r="17"/><path d="M19 10 V28 M10 19 H28"/></svg>
 <div class="t" style="right:16px;top:119px;font-size:16px">Pers dictionary 1</div>
 <div class="t" style="left:51px;top:176px;font-size:10px">Search word...</div>
 <svg style="position:absolute;left:223px;top:174px" width="12" height="14" fill="none" stroke="#333" stroke-width="1"><circle cx="5" cy="5" r="4"/><path d="M8 8 L11 13"/></svg>
 <div style="position:absolute;left:51px;top:196px;width:190px;height:1px;background:#555"></div>
 <div class="t" style="left:44px;top:239px;font-size:12px;line-height:38px">Word 1<br>Word 1<br>Word 1<br>Word 1<br>Word 1<br>Word 1</div>
 <div class="t" style="left:160px;top:239px;font-size:12px;line-height:38px">Word 2<br>Word 2<br>Word 2<br>Word 2<br>Word 2<br>Word 2</div>
 <div class="btn" style="left:46px;top:472px;width:166px;height:24px;line-height:24px">Study</div>
</div>

<!-- Dictionary 3 -->
<div class="lbl" style="left:913px;top:2617px">Dictionary</div>
<div class="f" style="left:913px;top:2631px;width:260px;height:520px">
 <svg class="bg" viewBox="0 0 260 520" preserveAspectRatio="none"><path d="M260,303Q210,460 0,504V520H260Z" fill="#3a53c1"/></svg>
 <svg class="chev" style="left:17px;top:14px" width="10" height="22" fill="none" stroke="#3a53c1" stroke-width="1.2"><path d="M8 1 L2 11 L8 21"/></svg>
 <div class="t" style="left:0;width:260px;text-align:center;top:86px;font-size:11px">1/38</div>
 <div class="card" style="left:38px;top:110px;width:183px;height:182px;border-radius:6px"></div>
 <div class="t" style="left:0;width:260px;text-align:center;top:184px;font-size:13px">Original Word</div>
 <svg class="chev" style="left:16px;top:188px" width="10" height="22" fill="none" stroke="#3a53c1" stroke-width="1.2"><path d="M8 1 L2 11 L8 21"/></svg>
 <svg class="chev" style="left:231px;top:192px" width="10" height="22" fill="none" stroke="#3a53c1" stroke-width="1.2"><path d="M2 1 L8 11 L2 21"/></svg>
</div>

<!-- Dictionary 4 (blue) -->
<div class="lbl" style="left:1198px;top:2617px">Dictionary</div>
<div class="f" style="left:1198px;top:2631px;width:260px;height:520px">
 <svg class="bg" viewBox="0 0 260 520" preserveAspectRatio="none"><path d="M260,303Q210,460 0,504V520H260Z" fill="#3a53c1"/></svg>
 <svg class="chev" style="left:17px;top:14px" width="10" height="22" fill="none" stroke="#3a53c1" stroke-width="1.2"><path d="M8 1 L2 11 L8 21"/></svg>
 <div class="t" style="left:0;width:260px;text-align:center;top:86px;font-size:11px">1/38</div>
 <div class="card" style="left:38px;top:110px;width:183px;height:182px;border-radius:6px;background:#93a6f7"></div>
 <div class="t" style="left:0;width:260px;text-align:center;top:184px;font-size:13px">Meaning word</div>
 <div class="t" style="left:0;width:260px;text-align:center;top:211px;font-size:9px">(Pronunciation)</div>
 <svg class="chev" style="left:16px;top:188px" width="10" height="22" fill="none" stroke="#3a53c1" stroke-width="1.2"><path d="M8 1 L2 11 L8 21"/></svg>
 <svg class="chev" style="left:231px;top:192px" width="10" height="22" fill="none" stroke="#3a53c1" stroke-width="1.2"><path d="M2 1 L8 11 L2 21"/></svg>
 <div class="btn" style="left:90px;top:306px;width:83px;height:24px;line-height:24px">Got it!</div>
</div>

<!-- Dictionary 5 (green) -->
<div class="lbl" style="left:1472px;top:2615px">Dictionary</div>
<div class="f" style="left:1472px;top:2629px;width:260px;height:520px">
 <svg class="bg" viewBox="0 0 260 520" preserveAspectRatio="none"><path d="M260,303Q210,460 0,504V520H260Z" fill="#3a53c1"/></svg>
 <svg class="chev" style="left:17px;top:14px" width="10" height="22" fill="none" stroke="#3a53c1" stroke-width="1.2"><path d="M8 1 L2 11 L8 21"/></svg>
 <div class="t" style="left:0;width:260px;text-align:center;top:85px;font-size:11px">1/38</div>
 <div class="card" style="left:38px;top:109px;width:183px;height:182px;border-radius:6px;background:#e0ffd9"></div>
 <div class="t" style="left:0;width:260px;text-align:center;top:183px;font-size:13px">Meaning word</div>
 <div class="t" style="left:0;width:260px;text-align:center;top:210px;font-size:9px">(Pronunciation)</div>
 <svg class="chev" style="left:16px;top:187px" width="10" height="22" fill="none" stroke="#3a53c1" stroke-width="1.2"><path d="M8 1 L2 11 L8 21"/></svg>
 <svg class="chev" style="left:231px;top:191px" width="10" height="22" fill="none" stroke="#3a53c1" stroke-width="1.2"><path d="M2 1 L8 11 L2 21"/></svg>
</div>

<!-- Dictionary 6 (congrats) -->
<div class="lbl" style="left:1756px;top:2615px">Dictionary</div>
<div class="f" style="left:1756px;top:2629px;width:260px;height:520px">
 <svg class="bg" viewBox="0 0 260 520" preserveAspectRatio="none"><path d="M260,303Q210,460 0,504V520H260Z" fill="#3a53c1"/></svg>
 <svg class="chev" style="left:17px;top:14px" width="10" height="22" fill="none" stroke="#3a53c1" stroke-width="1.2"><path d="M8 1 L2 11 L8 21"/></svg>
 <div class="t" style="left:0;width:260px;text-align:center;top:183px;font-size:14px;line-height:19px">You got 32/38<br>Congrats!</div>
 <div class="btn" style="left:90px;top:307px;width:84px;height:23px;line-height:23px;font-size:12px">Go back</div>
</div>

<!-- Row 6: Profile -->
<div class="lbl" style="left:346px;top:3183px">Profile</div>
<div class="f" style="left:346px;top:3197px;width:260px;height:519px">
 <svg class="bg" viewBox="0 0 260 519" preserveAspectRatio="none"><path d="M260,267Q200,400 0,460V519H260Z" fill="#3a53c1"/></svg>
 <div class="t" style="left:18px;top:27px;font-size:12px">Name</div>
 <div class="t" style="left:18px;top:43px;font-size:9px;color:#777">Full name</div>
 <div style="position:absolute;left:18px;top:73px;width:230px;height:1px;background:#555"></div>
 <div class="t" style="left:18px;top:89px;font-size:12px">Level 6</div>
 <div style="position:absolute;left:17px;top:113px;width:178px;height:16px;background:#c4c4c4"></div>
 <div style="position:absolute;left:17px;top:113px;width:126px;height:16px;background:#3a53c1;color:#fff;font-size:9px;line-height:16px;text-align:right;padding-right:12px">850/1200</div>
 <svg style="position:absolute;left:18px;top:176px" width="16" height="28" fill="none" stroke="#333" stroke-width="1"><circle cx="8" cy="10" r="7"/><path d="M8 6 L9 9 L12 9 L9.5 11 L10.5 14 L8 12 L5.5 14 L6.5 11 L4 9 L7 9 Z M4 16 L2 26 L5 24 L7 27 L8 17 M12 16 L14 26 L11 24 L9 27"/></svg>
 <div class="t" style="left:50px;top:183px;font-size:10px">My badges</div>
 <svg style="position:absolute;left:17px;top:223px" width="20" height="22" fill="none" stroke="#333" stroke-width="1"><circle cx="6" cy="6" r="4.5"/><circle cx="14" cy="6" r="4.5"/><path d="M1 21 Q1 12 7 12 Q12 12 12 19 V21 Z M9 12 Q12 11 14 11 Q19 11 19 19 H13"/></svg>
 <div class="t" style="left:50px;top:228px;font-size:10px">Friends</div>
 <div class="t" style="right:12px;top:438px;font-size:18px;color:#fff">Profile</div>
 <div class="nav" style="background:transparent;height:34px">
  <svg style="left:28px;top:4px" width="20" height="22" viewBox="0 0 20 22" fill="none" stroke="#fff" stroke-width="1.2"><path d="M2 10 L10 2 L18 10 M4 8 V21 H8 V14 H12 V21 H16 V8"/></svg>
  <svg style="left:90px;top:4px" width="20" height="22" viewBox="0 0 20 22" fill="none" stroke="#fff" stroke-width="1.2"><path d="M2 7 L10 3 L18 7 L10 11 Z M6 9 V14 Q10 17 14 14 V9 M17 8 V18"/></svg>
  <svg style="left:150px;top:4px" width="20" height="22" viewBox="0 0 20 22" fill="none" stroke="#fff" stroke-width="1.2"><path d="M1 2 H9 V20 H1 Z M11 2 H19 V20 H11 Z M3 6 H7 M3 10 H7 M3 14 H7 M13 6 H17 M13 10 H17 M13 14 H17"/></svg>
  <svg style="left:211px;top:2px" width="20" height="24" viewBox="0 0 20 24" fill="none" stroke="#fff" stroke-width="1.2"><circle cx="10" cy="6" r="5"/><path d="M2 23 V19 Q2 13 10 13 Q18 13 18 19 V23 Z"/></svg>
 </div>
</div>

<!-- Friend list -->
<div class="lbl" style="left:631px;top:3183px">Friend list</div>
<div class="f" style="left:631px;top:3197px;width:260px;height:519px">
 <svg class="bg" viewBox="0 0 260 519" preserveAspectRatio="none"><path d="M260,312Q210,460 0,510V519H260Z" fill="#3a53c1"/></svg>
 <svg class="chev" style="left:18px;top:14px" width="10" height="22" fill="none" stroke="#3a53c1" stroke-width="1.2"><path d="M8 1 L2 11 L8 21"/></svg>
 <svg style="position:absolute;left:215px;top:8px" width="33" height="33" fill="none" stroke="#3a53c1" stroke-width="1.8"><circle cx="16.5" cy="16.5" r="15"/><path d="M16.5 8 V25 M8 16.5 H25"/></svg>
 <div class="t" style="left:18px;top:64px;font-size:12px">Name</div>
 <div class="t" style="left:18px;top:108px;font-size:12px">Name</div>
 <div class="t" style="left:17px;top:152px;font-size:12px">Name</div>
 <div class="t" style="left:18px;top:195px;font-size:12px">Name</div>
 <div class="t" style="left:18px;top:243px;font-size:12px">Name</div>
 <div style="position:absolute;left:18px;top:86px;width:230px;height:1px;background:#555"></div>
 <div style="position:absolute;left:18px;top:130px;width:230px;height:1px;background:#555"></div>
 <div style="position:absolute;left:17px;top:174px;width:230px;height:1px;background:#555"></div>
 <div style="position:absolute;left:18px;top:216px;width:230px;height:1px;background:#555"></div>
 <div style="position:absolute;left:18px;top:265px;width:230px;height:1px;background:#555"></div>
 <svg style="position:absolute;left:237px;top:62px" width="10" height="200" fill="none" stroke="#333" stroke-width="1"><path d="M1 1 L7 9 L1 17 M1 45 L7 53 L1 61 M1 89 L7 97 L1 105 M1 131 L7 139 L1 147 M1 180 L7 188 L1 196"/></svg>
</div>

<!-- Friend's profile -->
<div class="lbl" style="left:916px;top:3183px">Friend's profile</div>
<div class="f" style="left:916px;top:3197px;width:260px;height:519px">
 <svg class="bg" viewBox="0 0 260 519" preserveAspectRatio="none"><path d="M260,318Q210,460 0,505V519H260Z" fill="#3a53c1"/></svg>
 <svg class="chev" style="left:18px;top:14px" width="10" height="22" fill="none" stroke="#3a53c1" stroke-width="1.2"><path d="M8 1 L2 11 L8 21"/></svg>
 <div class="t" style="left:15px;top:50px;font-size:12px">Name</div>
 <div class="t" style="left:15px;top:66px;font-size:9px;color:#777">Full name</div>
 <div style="position:absolute;left:15px;top:96px;width:230px;height:1px;background:#555"></div>
 <div class="t" style="left:15px;top:112px;font-size:12px">Level 12</div>
 <div style="position:absolute;left:14px;top:136px;width:178px;height:15px;background:#c4c4c4;color:#fff;font-size:9px;line-height:15px;padding-left:64px;text-indent:13px">350/1900</div>
 <div style="position:absolute;left:14px;top:136px;width:50px;height:15px;background:#3a53c1"></div>
 <svg style="position:absolute;left:15px;top:199px" width="16" height="28" fill="none" stroke="#333" stroke-width="1"><circle cx="8" cy="10" r="7"/><path d="M8 6 L9 9 L12 9 L9.5 11 L10.5 14 L8 12 L5.5 14 L6.5 11 L4 9 L7 9 Z M4 16 L2 26 L5 24 L7 27 L8 17 M12 16 L14 26 L11 24 L9 27"/></svg>
 <div class="t" style="left:48px;top:205px;font-size:11px">Badges</div>
</div>

<!-- Badges -->
<div class="lbl" style="left:1201px;top:3183px">Badges</div>
<div class="f" style="left:1201px;top:3197px;width:260px;height:519px">
 <svg class="chev" style="left:18px;top:13px" width="10" height="22" fill="none" stroke="#3a53c1" stroke-width="1.2"><path d="M8 1 L2 11 L8 21"/></svg>
 <div class="t" style="left:0;width:260px;text-align:center;top:15px;font-size:13px">My badges</div>
 <div class="cc" style="left:27px;top:68px;width:41px;height:44px;background:#404040"></div>
 <div class="cc" style="left:107px;top:68px;width:41px;height:44px;background:#c4c4c4"></div>
 <div class="cc" style="left:188px;top:68px;width:41px;height:44px;background:#c4c4c4"></div>
 <div class="cc" style="left:27px;top:146px;width:41px;height:44px;background:#c4c4c4"></div>
 <div class="cc" style="left:107px;top:146px;width:41px;height:44px;background:#c4c4c4"></div>
 <div class="cc" style="left:188px;top:146px;width:41px;height:44px;background:#404040"></div>
 <div class="cc" style="left:27px;top:224px;width:41px;height:44px;background:#404040"></div>
 <div class="cc" style="left:107px;top:224px;width:41px;height:44px;background:#404040"></div>
 <div class="cc" style="left:188px;top:224px;width:41px;height:44px;background:#c4c4c4"></div>
 <div class="cc" style="left:27px;top:302px;width:41px;height:44px;background:#404040"></div>
 <div class="cc" style="left:107px;top:302px;width:41px;height:44px;background:#c4c4c4"></div>
 <div class="cc" style="left:188px;top:302px;width:41px;height:44px;background:#404040"></div>
 <div class="cc" style="left:27px;top:379px;width:41px;height:44px;background:#c4c4c4"></div>
 <div class="cc" style="left:107px;top:379px;width:41px;height:44px;background:#404040"></div>
 <div class="cc" style="left:188px;top:379px;width:41px;height:44px;background:#c4c4c4"></div>
 <div class="t" style="left:28px;width:40px;text-align:center;top:116px;font-size:9px;line-height:13px">???</div>
 <div class="t" style="left:108px;width:40px;text-align:center;top:116px;font-size:9px;line-height:13px">Badge<br>Name</div>
 <div class="t" style="left:189px;width:40px;text-align:center;top:116px;font-size:9px;line-height:13px">Badge<br>Name</div>
 <div class="t" style="left:28px;width:40px;text-align:center;top:194px;font-size:9px;line-height:13px">Badge<br>Name</div>
 <div class="t" style="left:108px;width:40px;text-align:center;top:194px;font-size:9px;line-height:13px">Badge<br>Name</div>
 <div class="t" style="left:189px;width:40px;text-align:center;top:194px;font-size:9px;line-height:13px">???</div>
 <div class="t" style="left:28px;width:40px;text-align:center;top:272px;font-size:9px;line-height:13px">???</div>
 <div class="t" style="left:108px;width:40px;text-align:center;top:272px;font-size:9px;line-height:13px">???</div>
 <div class="t" style="left:189px;width:40px;text-align:center;top:272px;font-size:9px;line-height:13px">Badge<br>Name</div>
 <div class="t" style="left:28px;width:40px;text-align:center;top:350px;font-size:9px;line-height:13px">???</div>
 <div class="t" style="left:108px;width:40px;text-align:center;top:350px;font-size:9px;line-height:13px">Badge<br>Name</div>
 <div class="t" style="left:189px;width:40px;text-align:center;top:350px;font-size:9px;line-height:13px">???</div>
 <div class="t" style="left:28px;width:40px;text-align:center;top:427px;font-size:9px;line-height:13px">???</div>
 <div class="t" style="left:108px;width:40px;text-align:center;top:427px;font-size:9px;line-height:13px">Badge<br>Name</div>
 <svg class="bg" viewBox="0 0 260 519" preserveAspectRatio="none"><path d="M260,318Q200,460 0,505V519H260Z" fill="#3a53c1"/></svg>
</div>

<!-- Badges description -->
<div class="lbl" style="left:1476px;top:3184px">Badges description</div>
<div class="f" style="left:1476px;top:3198px;width:260px;height:519px">
 <svg class="chev" style="left:18px;top:13px" width="10" height="22" fill="none" stroke="#3a53c1" stroke-width="1.2"><path d="M8 1 L2 11 L8 21"/></svg>
 <div class="t" style="left:0;width:260px;text-align:center;top:15px;font-size:13px">My badges</div>
 <div class="cc" style="left:27px;top:68px;width:41px;height:44px;background:#404040"></div>
 <div class="cc" style="left:107px;top:68px;width:41px;height:44px;background:#c4c4c4"></div>
 <div class="cc" style="left:188px;top:68px;width:41px;height:44px;background:#c4c4c4"></div>
 <div class="cc" style="left:27px;top:146px;width:41px;height:44px;background:#c4c4c4"></div>
 <div class="cc" style="left:188px;top:146px;width:41px;height:44px;background:#404040"></div>
 <div class="cc" style="left:27px;top:224px;width:41px;height:44px;background:#404040"></div>
 <div class="cc" style="left:188px;top:224px;width:41px;height:44px;background:#c4c4c4"></div>
 <div class="cc" style="left:27px;top:302px;width:41px;height:44px;background:#404040"></div>
 <div class="cc" style="left:107px;top:302px;width:41px;height:44px;background:#c4c4c4"></div>
 <div class="cc" style="left:188px;top:302px;width:41px;height:44px;background:#404040"></div>
 <div class="cc" style="left:27px;top:379px;width:41px;height:44px;background:#c4c4c4"></div>
 <div class="cc" style="left:107px;top:379px;width:41px;height:44px;background:#404040"></div>
 <div class="cc" style="left:188px;top:379px;width:41px;height:44px;background:#c4c4c4"></div>
 <div class="t" style="left:28px;width:40px;text-align:center;top:116px;font-size:9px;line-height:13px">???</div>
 <div class="t" style="left:189px;width:40px;text-align:center;top:116px;font-size:9px;line-height:13px">Badge<br>Name</div>
 <div class="t" style="left:28px;width:40px;text-align:center;top:194px;font-size:9px;line-height:13px">Badge<br>Name</div>
 <div class="t" style="left:189px;width:40px;text-align:center;top:194px;font-size:9px;line-height:13px">???</div>
 <div class="t" style="left:28px;width:40px;text-align:center;top:272px;font-size:9px;line-height:13px">???</div>
 <div class="t" style="left:189px;width:40px;text-align:center;top:272px;font-size:9px;line-height:13px">Badge<br>Name</div>
 <div class="t" style="left:28px;width:40px;text-align:center;top:350px;font-size:9px;line-height:13px">???</div>
 <div class="t" style="left:108px;width:40px;text-align:center;top:350px;font-size:9px;line-height:13px">Badge<br>Name</div>
 <div class="t" style="left:189px;width:40px;text-align:center;top:350px;font-size:9px;line-height:13px">???</div>
 <div class="t" style="left:28px;width:40px;text-align:center;top:427px;font-size:9px;line-height:13px">???</div>
 <div class="t" style="left:108px;width:40px;text-align:center;top:427px;font-size:9px;line-height:13px">Badge<br>Name</div>
 <div class="card" style="left:48px;top:122px;width:164px;height:160px;border-radius:4px">
  <div class="t" style="left:0;width:164px;text-align:center;top:7px;font-size:12px">Badge name</div>
  <div class="cc" style="left:61px;top:27px;width:41px;height:44px;background:#c4c4c4"></div>
  <div class="t" style="left:12px;top:78px;font-size:9.5px;line-height:13.5px">This is a description of a<br>badge it can be pretty<br>lengthy.</div>
 </div>
 <svg class="bg" viewBox="0 0 260 519" preserveAspectRatio="none"><path d="M260,318Q200,460 0,505V519H260Z" fill="#3a53c1"/></svg>
</div>
</body></html>
